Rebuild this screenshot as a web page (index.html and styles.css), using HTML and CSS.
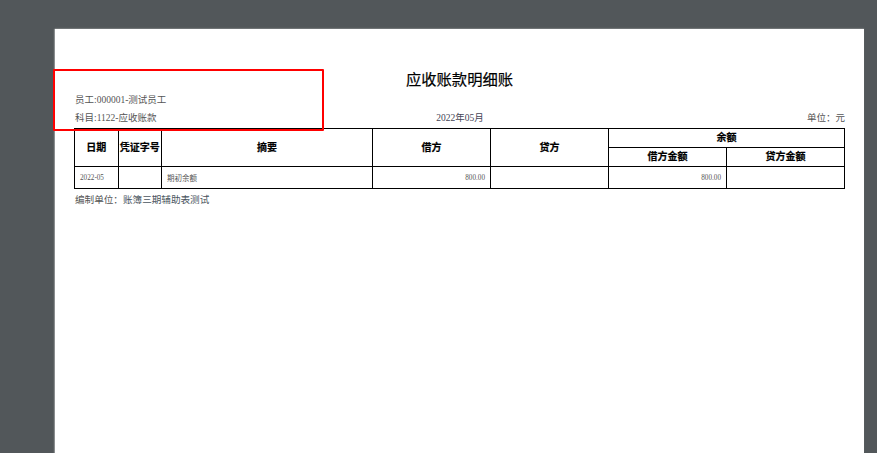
FILE: index.html
```html
<!DOCTYPE html>
<html>
    <head>
        <meta charset="utf-8">
        <title>应收账款明细账</title>
        <link rel="stylesheet" href="styles.css">
    </head>
    <body>
        <div class="page">
            <h1 class="title">应收账款明细账</h1>
            <div class="info">员工:000001-测试员工</div>
            <div class="info-row">
                <span class="info-col left">科目:1122-应收账款</span>
                <span class="info-col center">2022年05月</span>
                <span class="info-col right">单位：元</span>
            </div>
            <table class="ledger">
                <colgroup>
                    <col class="w-date">
                    <col class="w-date">
                    <col class="w-memo">
                    <col class="w-money">
                    <col class="w-money">
                    <col class="w-money">
                    <col class="w-money">
                </colgroup>
                <tr class="head">
                    <th rowspan="2">日期</th>
                    <th rowspan="2">凭证字号</th>
                    <th rowspan="2">摘要</th>
                    <th rowspan="2">借方</th>
                    <th rowspan="2">贷方</th>
                    <th colspan="2">余额</th>
                </tr>
                <tr class="head">
                    <th>借方金额</th>
                    <th>贷方金额</th>
                </tr>
                <tr class="data">
                    <td class="date">2022-05</td>
                    <td></td>
                    <td class="memo">期初余额</td>
                    <td class="num">800.00</td>
                    <td></td>
                    <td class="num">800.00</td>
                    <td></td>
                </tr>
            </table>
            <div class="footer">编制单位：<span class="company">账簿三期辅助表测试</span></div>
        </div>
        <!-- 红色标记框 -->
        <div class="mark"></div>
    </body>
</html>
```

FILE: styles.css
```css
html, body {
    margin: 0;
    padding: 0;
    height: 453px;
    overflow: hidden;
}
body {
    background-color: #52575a;
    font-family: "Liberation Serif", "Noto Sans CJK SC", serif;
    color: #555;
    position: relative;
}
.page {
    box-sizing: border-box;
    width: 809px;
    height: 424px;
    margin: 29px 0 0 55px;
    padding: 41px 19px 0 19px;
    background-color: #fff;
    box-shadow: -1px 0 1px #8a8d8f, 0 -1px 1px #6b6f72;
}
.title {
    margin: 0 0 2px 0;
    height: 19px;
    line-height: 19px;
    font-size: 15.3px;
    font-weight: normal;
    color: #000;
    text-align: center;
    -webkit-text-stroke: 0.2px #000;
}
.info {
    height: 18px;
    line-height: 18px;
    font-size: 9.5px;
    padding-left: 1px;
}
.info-row {
    display: flex;
    height: 19px;
    line-height: 19px;
    font-size: 9.5px;
}
.info-col {
    flex: 1;
}
.left {
    padding-left: 1px;
}
.center {
    text-align: center;
    color: #445;
}
.right {
    text-align: right;
}
.ledger {
    table-layout: fixed;
    width: 770px;
    border-collapse: collapse;
}
.w-date {
    width: 43.5px;
}
.w-memo {
    width: 211px;
}
.w-money {
    width: 118px;
}
.ledger th, .ledger td {
    border: 1px solid #000;
    padding: 0;
}
.head {
    height: 19px;
}
.head th {
    font-size: 10px;
    font-weight: bold;
    color: #000;
    line-height: 12px;
    -webkit-text-stroke: 0.2px #000;
}
.data {
    height: 22px;
}
.data td {
    font-size: 7.5px;
    color: #555;
}
.date {
    padding-left: 5px !important;
    font-size: 7.2px !important;
}
.memo {
    padding-left: 5px !important;
}
.num {
    text-align: right;
    padding-right: 5px !important;
    font-size: 7.2px !important;
}
.footer {
    margin-top: 4px;
    padding-left: 1px;
    height: 14px;
    line-height: 14px;
    font-size: 9.6px;
}
.company {
    color: #4a5560;
}
.mark {
    position: absolute;
    left: 53px;
    top: 69px;
    width: 267px;
    height: 58px;
    border: 2px solid #f00;
    border-radius: 1px;
}
```
